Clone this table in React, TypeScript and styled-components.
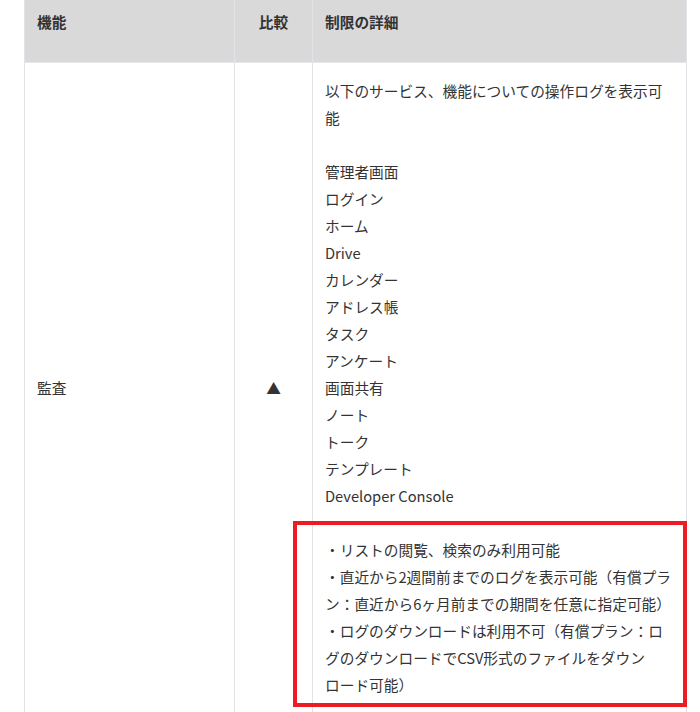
import React from "react";
import styled, { createGlobalStyle } from "styled-components";

const GlobalStyle = createGlobalStyle`
  html, body {
    margin: 0;
    padding: 0;
    background: #fff;
  }
  body {
    font-family: "Noto Sans CJK JP", "Noto Sans", sans-serif;
    color: #333;
  }
`;

const Page = styled.div`
  padding: 0 14px 0 24px;
  width: 662px;
`;

const Table = styled.table`
  width: 662px;
  table-layout: fixed;
  border-collapse: collapse;
  font-size: 14.7px;
  line-height: 27px;
  line-break: strict;
`;

const Col = styled.col<{ $w: number }>`
  width: ${(p) => p.$w}px;
`;

const Th = styled.th<{ $center?: boolean }>`
  height: 62px;
  box-sizing: border-box;
  padding: 8px 12px 27px;
  background: #d9d9d9;
  border-left: 1px solid #e2e2e8;
  border-right: 1px solid #e2e2e8;
  border-bottom: 1px solid #e6e6ea;
  text-align: ${(p) => (p.$center ? "center" : "left")};
  vertical-align: top;
  font-weight: bold;
  color: #333;
`;

const Td = styled.td<{ $center?: boolean }>`
  padding: 14px 12px 14px;
  border: 1px solid #e2e2e8;
  text-align: ${(p) => (p.$center ? "center" : "left")};
  vertical-align: middle;
  color: #333;
`;

const Block = styled.div`
  margin-bottom: 27px;
  &:last-child {
    margin-bottom: 0;
  }
`;

const Line = styled.div`
  line-break: strict;
`;

const Highlight = styled.div`
  position: relative;
  &::after {
    content: "";
    position: absolute;
    top: -15px;
    left: -32px;
    right: -13px;
    bottom: -9px;
    border: 4px solid #ed1c24;
    pointer-events: none;
  }
`;

const services = [
  "管理者画面",
  "ログイン",
  "ホーム",
  "Drive",
  "カレンダー",
  "アドレス帳",
  "タスク",
  "アンケート",
  "画面共有",
  "ノート",
  "トーク",
  "テンプレート",
  "Developer Console",
];

const limits = [
  "・リストの閲覧、検索のみ利用可能",
  "・直近から2週間前までのログを表示可能（有償プラン：直近から6ヶ月前までの期間を任意に指定可能）",
  "・ログのダウンロードは利用不可（有償プラン：ログのダウンロードでCSV形式のファイルをダウンロード可能）",
];

export default function App() {
  return (
    <Page lang="ja">
      <GlobalStyle />
      <Table>
        <colgroup>
          <Col $w={210} />
          <Col $w={78} />
          <Col $w={374} />
        </colgroup>
        <thead>
          <tr>
            <Th>機能</Th>
            <Th $center>比較</Th>
            <Th>制限の詳細</Th>
          </tr>
        </thead>
        <tbody>
          <tr>
            <Td>監査</Td>
            <Td $center>▲</Td>
            <Td>
              <Block>以下のサービス、機能についての操作ログを表示可能</Block>
              <Block>
                {services.map((s) => (
                  <Line key={s}>{s}</Line>
                ))}
              </Block>
              <Block>
                <Highlight>
                  {limits.map((s) => (
                    <Line key={s}>{s}</Line>
                  ))}
                </Highlight>
              </Block>
            </Td>
          </tr>
        </tbody>
      </Table>
    </Page>
  );
}
